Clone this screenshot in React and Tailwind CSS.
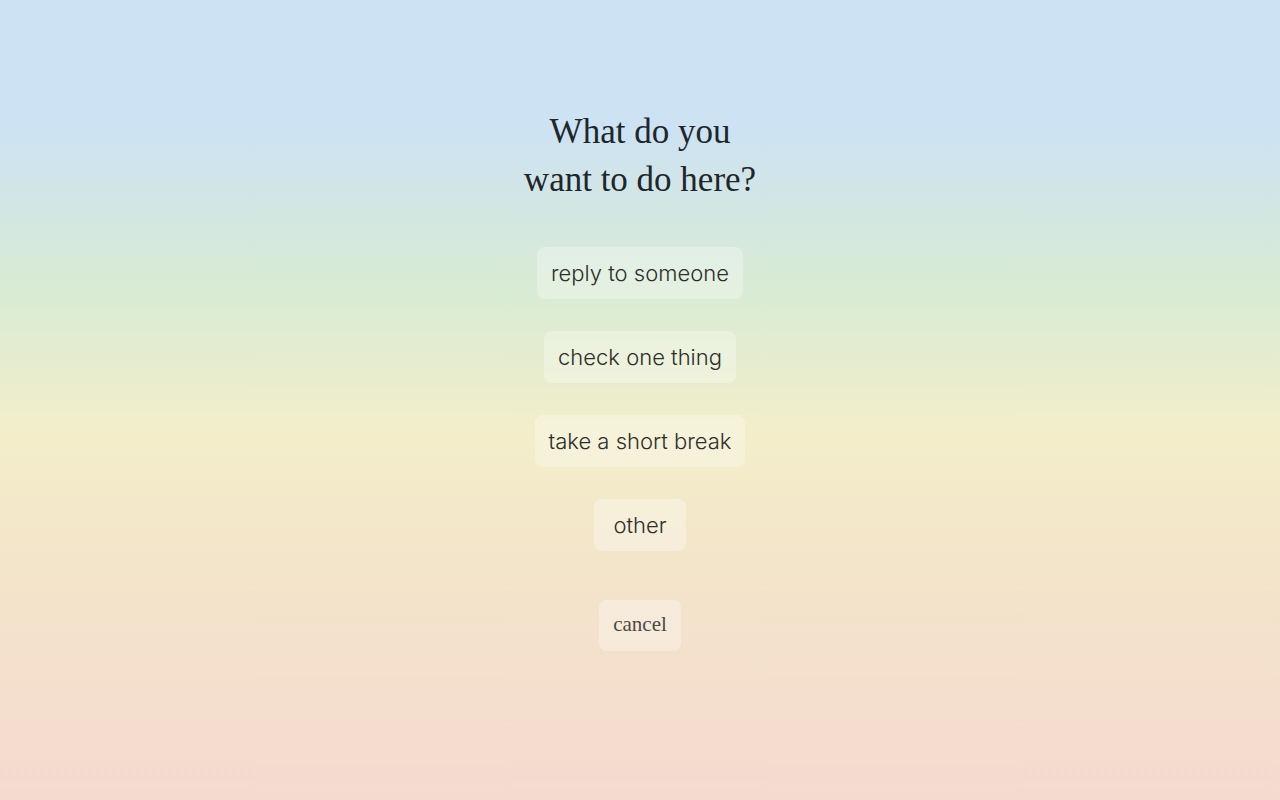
import React from "react";

const options = ["reply to someone", "check one thing", "take a short break", "other"];

export default function App() {
  return (
    <div className="h-[800px] w-full bg-[linear-gradient(to_bottom,#cde2f3_0%,#cde2f3_16%,#d8ebd4_36%,#f3eeca_54%,#f3e4ca_72%,#f5dad0_100%)] flex flex-col items-center">
      <h1 className="mt-[108px] text-center font-['Liberation_Serif',serif] text-[35px] leading-[48px] text-[#20262b]">
        What do you
        <br />
        want to do here?
      </h1>
      <div className="mt-[43px] flex flex-col items-center gap-8">
        {options.map((label) => (
          <button
            key={label}
            className="h-[52px] min-w-[92px] px-[14px] rounded-lg bg-white/30 font-['Inter',sans-serif] font-light text-[22px] text-[#2c2e29] cursor-pointer"
          >
            {label}
          </button>
        ))}
      </div>
      <button className="mt-[49px] h-[51px] px-[14px] pb-[2px] rounded-lg bg-white/30 font-['Liberation_Serif',serif] text-[21px] text-[#4a4a45] cursor-pointer">
        cancel
      </button>
    </div>
  );
}
